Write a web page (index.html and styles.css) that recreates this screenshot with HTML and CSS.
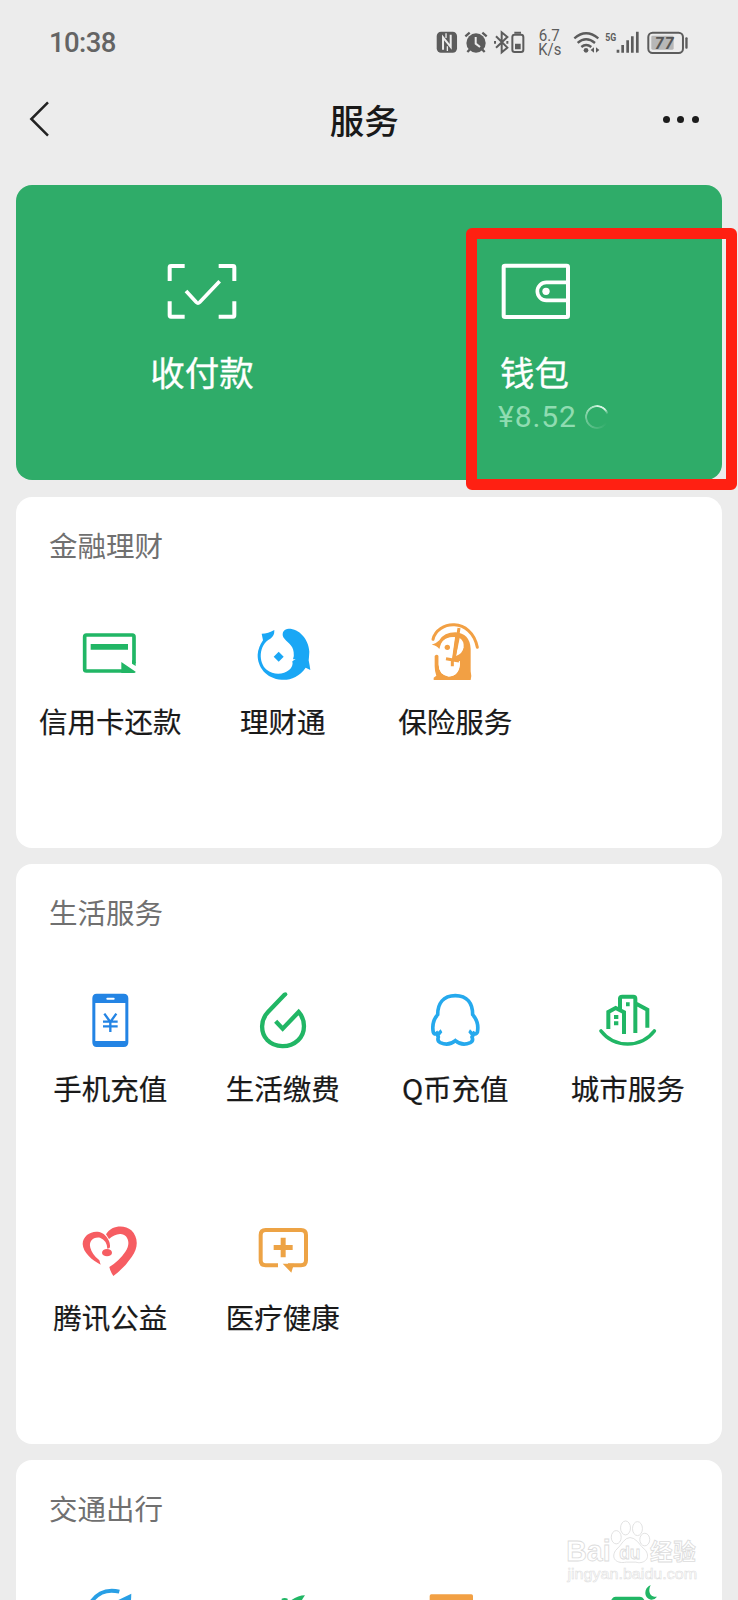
FILE: index.html
```html
<!DOCTYPE html>
<html lang="zh-CN">
<head>
<meta charset="utf-8">
<title>服务</title>
<link rel="stylesheet" href="styles.css">
</head>
<body>
<div class="screen">
  <div class="status">
    <span class="clock">10:38</span>
    <svg class="status-icons" viewBox="40 40 780 110" fill="#5c5c5c">
      <rect x="51" y="63" width="61" height="63" rx="13"/>
      <path d="M70 117V80L93 109V72" fill="none" stroke="#ececec" stroke-width="6"/>
      <path d="M79 68v14M83 121v-14" stroke="#ececec" stroke-width="4"/>
      <circle cx="169" cy="97" r="29"/>
      <path d="M137 77l13-11M201 77l-13-11M150 117l-7 7M188 117l7 7" stroke="#5c5c5c" stroke-width="7"/>
      <path d="M168 79v20l13 10" fill="none" stroke="#ececec" stroke-width="6"/>
      <path d="M229 77l34 34-17 14V65l17 14-34 32M226 91v8M263 91v8" fill="none" stroke="#5c5c5c" stroke-width="6"/>
      <rect x="278" y="72" width="33" height="52" rx="7" fill="none" stroke="#5c5c5c" stroke-width="6"/>
      <path d="M284 63h20v6h-20zM286 99h17v17h-17z"/>
      <text class="net" x="357" y="90" textLength="63" lengthAdjust="spacingAndGlyphs">6.7</text>
      <text class="net" x="356" y="134" textLength="69" lengthAdjust="spacingAndGlyphs">K/s</text>
      <path d="M464 83q35-30 72 0M474 97q25-22 52 0M485 109q14-12 30 0" fill="none" stroke="#5c5c5c" stroke-width="7"/>
      <circle cx="499" cy="119" r="7"/>
      <path d="M513 118l10-8v16zM539 118l-10-8v16z"/>
      <text class="five" x="557" y="90" textLength="33" lengthAdjust="spacingAndGlyphs">5G</text>
      <path d="M595 117v9M609 103v23M624 89v37M638 77v49M653 63v63" stroke="#5c5c5c" stroke-width="8"/>
      <rect x="686" y="66" width="104" height="61" rx="13" fill="none" stroke="#5c5c5c" stroke-width="6"/>
      <rect x="695" y="75" width="67" height="42" rx="4" fill="#b7b7b7"/>
      <rect x="797" y="80" width="7" height="34" rx="3"/>
      <text class="charge" x="705" y="114" textLength="57">77</text>
    </svg>
  </div>

  <div class="navbar">
    <svg class="back" viewBox="85 270 70 115"><path d="M145 277L95 327l50 50" fill="none" stroke="#222" stroke-width="7.500"/></svg>
    <h1 class="title">服务</h1>
    <div class="more"><i></i><i></i><i></i></div>
  </div>

  <div class="cards">
    <div class="pay">
      <div class="pay-item">
        <svg class="pay-icon" viewBox="109 66 216 176" fill="none" stroke="#fff" stroke-width="12">
          <path d="M120 123V82q0-4 4-4h41M267 78h43q4 0 4 4v41M120 184v42q0 4 4 4h41M267 230h43q4 0 4-4v-42"/>
          <path d="M169 153l31 34q5 5 10 0l60-63" stroke-width="11"/>
        </svg>
        <span class="pay-label">收付款</span>
      </div>
      <div class="pay-item wallet">
        <svg class="pay-icon" viewBox="150 126 216 176" fill="none" stroke="#fff" stroke-width="12">
          <rect x="161" y="137" width="193" height="154" rx="4"/>
          <path d="M354 187h-65a27 27 0 0 0 0 54h65" stroke-width="11"/>
          <circle cx="288" cy="214" r="11" fill="#fff" stroke="none"/>
        </svg>
        <span class="pay-label">钱包</span>
        <div class="balance"><span class="amount">¥8.52</span><i class="spinner"></i></div>
      </div>
      <div class="highlight"></div>
    </div>

    <section class="card">
      <h2 class="heading">金融理财</h2>
      <div class="grid">
        <div class="cell">
          <svg class="icon" viewBox="145 63 192 192" fill="#21b665">
            <path d="M313 190v-80q0-5-5-5H170q-5 0-5 5v98q0 5 5 5h122" fill="none" stroke="#21b665" stroke-width="11"/>
            <path d="M183 132h112v17H183zM275 186l43 29q0 4-6 4h-37zM307 180l11 7v11l-11-7z"/>
          </svg><span class="label">信用卡还款</span></div>
        <div class="cell">
          <svg class="icon" viewBox="32 63 192 192" fill="#1aa7f5">
            <path d="M64 101Q84 101 102 90Q103 108 90 116C54 135 54 188 79 209C111 236 164 214 156 184L166 177L158 178Q162 170 160 157C158 133 139 128 129 112C123 97 132 86 145 86C176 86 205 116 207 155Q206 173 205 181Q208 195 210 210L196 203C177 231 149 241 124 239C77 236 51 200 52 164Q53 143 68 121Z"/>
            <path d="M115 155l15 15-15 15-15-15z"/>
          </svg><span class="label">理财通</span></div>
        <div class="cell">
          <svg class="icon" viewBox="-5 9 192 192" fill="#f2a044">
            <path d="M25 64C37 8 140 -4 158 88" fill="none" stroke="#f2a044" stroke-width="9" stroke-linecap="round"/>
            <path d="M21 80Q36 76 44 67Q58 43 92 43Q135 46 138 92V160Q142 176 138 186H27V179L35 173Q30 160 30 145V114q6-7 12 0v25q0 32 30 37Q104 174 106 136L80 126L90 58Q60 54 49 77L44 93Q37 82 21 80Z"/>
            <path d="M48 84Q57 57 91 57L82 122L106 130Q106 174 73 175Q42 170 42 140V98L47 94Z" fill="#fff"/>
            <path d="M105 60Q119 69 117 88Q114 107 94 114Z" fill="#fff"/>
            <path d="M103 30L88 124M64 122L103 129M83 124V145" fill="none" stroke="#f2a044" stroke-width="9"/>
            <circle cx="68" cy="88" r="8"/>
          </svg><span class="label">保险服务</span></div>
      </div>
    </section>

    <section class="card">
      <h2 class="heading">生活服务</h2>
      <div class="grid">
        <div class="cell">
          <svg class="icon" viewBox="115 54 192 192" fill="#2384e4">
            <path fill-rule="evenodd" d="M171 71h81q14 0 14 14v132q0 14-14 14h-81q-13 0-13-14V85q0-14 13-14zM167 99v114h90V99z"/>
            <path d="M203 86h19" stroke="#fff" stroke-width="6" stroke-linecap="round"/>
            <path d="M194 131l18 25 18-25M190 155h44M190 169h44M212 154v32" fill="none" stroke="#2384e4" stroke-width="7"/>
          </svg><span class="label">手机充值</span></div>
        <div class="cell">
          <svg class="icon" viewBox="632 54 192 192" fill="none" stroke="#21b665" stroke-width="13">
            <path d="M734 73L683 126C660 150 660 187 680 209C704 234 747 235 773 211C798 188 795 148 775 126L727 176L706 154" stroke-linejoin="miter"/>
            <circle cx="735" cy="73" r="6" fill="#21b665" stroke="none"/>
          </svg><span class="label">生活缴费</span></div>
        <div class="cell">
          <svg class="icon" viewBox="70 54 192 192" fill="none" stroke="#25a9ed" stroke-width="11">
            <path d="M167 77C130 77 114 102 114 134C101 149 97 168 101 187Q104 195 111 190L116 201Q112 213 122 218Q147 229 167 212Q187 229 212 218Q222 213 217 201L223 190Q230 194 233 187C237 168 232 149 219 134C219 101 203 77 167 77Z"/>
            <path d="M109 191l14-13 5 9-12 15M225 191l-14-13-5 9 12 15" fill="#25a9ed" stroke="none"/>
          </svg><span class="label">Q币充值</span></div>
        <div class="cell">
          <svg class="icon" viewBox="587 54 192 192" fill="none" stroke="#21b665" stroke-width="12">
            <path d="M624 177v-51l22-12 25 13v65M659 119V86q0-6 7-6h33q6 0 6 6v103M705 100l36 19v54"/>
            <path d="M602 183Q632 222 682 222Q732 222 762 183" stroke-width="11" stroke-linecap="round"/>
            <path d="M641 135h13v12h-13zM641 154h13v12h-13zM677 97h11v12h-11z" fill="#21b665" stroke="none"/>
          </svg><span class="label">城市服务</span></div>
        <div class="cell">
          <svg class="icon" viewBox="115 51 192 192" fill="#f65d62">
            <path d="M183 194C157 181 130 157 129 132C130 97 181 80 203 114Q214 131 210 144L203 146Q202 121 181 113C159 110 147 125 152 143Q157 163 179 181Z"/>
            <path d="M199 103C216 75 255 74 275 91C296 112 297 143 276 171Q255 203 221 228Q213 217 209 201Q240 181 257 155C276 129 263 101 241 102Q223 103 208 117Z"/>
            <ellipse cx="202" cy="158" rx="15" ry="11"/>
          </svg><span class="label">腾讯公益</span></div>
        <div class="cell">
          <svg class="icon" viewBox="632 51 192 192" fill="#eda345">
            <path d="M713 196h-37q-15 0-15-15V105q0-15 15-15h106q15 0 15 15v76q0 15-15 15h-39" fill="none" stroke="#eda345" stroke-width="12"/>
            <path d="M721 113h15v22h21v15h-21v22h-15v-22h-21v-15h21zM727 191h34l-8 27z"/>
          </svg><span class="label">医疗健康</span></div>
      </div>
    </section>

    <section class="card">
      <h2 class="heading">交通出行</h2>
      <div class="grid">
        <div class="cell"><svg class="icon" viewBox="115 315 192 192" fill="none" stroke="#289fe5" stroke-width="12">
          <path d="M239 338C195 327 163 348 145 386"/><path d="M275 344l-39 19v20h37z" fill="#289fe5" stroke="none"/>
        </svg></div>
        <div class="cell"><svg class="icon" viewBox="632 315 192 192" fill="#21b665">
          <path d="M794 349q-21 0-42 15v20h21q8-16 21-35zM724 359q9-4 18 0v20h-18z"/>
        </svg></div>
        <div class="cell"><svg class="icon" viewBox="1150 315 192 192" fill="#f2a044">
          <rect x="1170" y="346" width="130" height="120" rx="5"/>
        </svg></div>
        <div class="cell"><svg class="icon" viewBox="167 315 192 192" fill="#21b665">
          <path d="M226 353h72q10 0 15 12v100H211v-98q5-14 15-14zM331 318c-23 10-20 41 1 44q11 1 18-9c-20 3-29-16-19-35z"/>
        </svg></div>
      </div>
    </section>
  </div>

  <svg class="watermark" viewBox="70 110 410 205" fill="#fff" stroke="#dcdcdc" stroke-width="2.500">
    <text class="wm-big" x="78" y="244" textLength="134" lengthAdjust="spacingAndGlyphs">Bai</text>
    <ellipse cx="229" cy="171" rx="15" ry="20"/>
    <ellipse cx="257" cy="143" rx="15" ry="21"/>
    <ellipse cx="293" cy="145" rx="15" ry="21"/>
    <ellipse cx="315" cy="178" rx="15" ry="19"/>
    <path d="M250 184q20-24 43 0 13 17 25 27c17 27-10 42-30 35h-29c-27 6-48-10-32-35q14-14 23-27z"/>
    <text class="wm-du" x="238" y="237" textLength="64" lengthAdjust="spacingAndGlyphs">du</text>
    <text class="wm-cn" x="331" y="239" textLength="138">经验</text>
    <text class="wm-url" x="82" y="297" textLength="391" lengthAdjust="spacingAndGlyphs">jingyan.baidu.com</text>
  </svg>
</div>
</body>
</html>
```

FILE: styles.css
```css
* { box-sizing: border-box; }
body { margin: 0; background: #ececec; }
.screen {
  position: relative;
  width: 738px;
  height: 1600px;
  overflow: hidden;
  background: #ececec;
  color: #191919;
  font-family: "Noto Sans CJK SC", sans-serif;
}
.status {
  display: flex;
  justify-content: space-between;
  align-items: center;
  height: 84px;
  padding: 0 45px 0 49px;
}
.clock {
  font: 500 27.500px Roboto, sans-serif;
  color: #646464;
  letter-spacing: -0.6px;
}
.status-icons { width: 260px; height: 36.670px; }
.net { font: 48px Roboto, sans-serif; }
.five { font: bold 35px Roboto, sans-serif; }
.charge { font: italic bold 48px Roboto, sans-serif; fill: #555; }

.navbar {
  display: flex;
  align-items: center;
  justify-content: space-between;
  height: 101px;
  padding: 0 39px 31px 28px;
}
.back { width: 23.330px; height: 38.330px; }
.title { margin: 0; padding-left: 14px; font-size: 34.500px; line-height: 50px; font-weight: 500; }
.more { display: flex; gap: 7.500px; }
.more i { width: 7px; height: 7px; border-radius: 50%; background: #1c1c1c; }

.cards { display: flex; flex-direction: column; gap: 16px; padding: 0 16px; }
.pay {
  position: relative;
  display: flex;
  height: 295px;
  border-radius: 16px;
  background: #2fac69;
  color: #fff;
}
.pay-item {
  display: flex;
  flex-direction: column;
  align-items: center;
  width: 372px;
  padding-top: 77px;
}
.wallet { align-items: flex-start; width: 334px; padding-left: 112px; }
.pay-icon { width: 72px; height: 58.670px; }
.pay-label { margin-top: 25px; font-size: 34.500px; line-height: 50px; -webkit-text-stroke: 0.3px #fff; }
.balance {
  display: flex;
  align-items: center;
  gap: 8px;
  height: 42px;
  margin-left: -2px;
  color: #8fdcb1;
}
.amount { font: 30px Roboto, sans-serif; letter-spacing: 0.9px; }
.spinner {
  width: 24px;
  height: 24px;
  border-radius: 50%;
  background: conic-gradient(#d8f5e4 0deg, #d8f5e4 45deg, rgba(255,255,255,0) 75deg, rgba(255,255,255,0) 120deg, rgba(190,235,208,.5) 270deg, #c2efd4 360deg);
  -webkit-mask: radial-gradient(circle, transparent 9.500px, #000 10.300px);
  mask: radial-gradient(circle, transparent 9.500px, #000 10.300px);
}
.highlight {
  position: absolute;
  left: 450px;
  top: 43px;
  width: 271px;
  height: 262px;
  border: 11.500px solid #ff2012;
  border-radius: 6px;
}
.card { border-radius: 16px; background: #fff; padding: 28px 8px 24px; }
.card:nth-child(2) { margin-top: 1px; }
.card:last-child { height: 400px; }
.heading {
  margin: -1px 0 29px;
  padding-left: 25px;
  font-size: 28.500px;
  line-height: 42px;
  font-weight: 400;
  color: #707070;
}
.grid { display: grid; grid-template-columns: repeat(4, 1fr); grid-auto-rows: 229px; }
.cell { display: flex; flex-direction: column; align-items: center; padding-top: 26px; }
.icon { width: 64px; height: 64px; }
.label { margin-top: 15px; font-size: 28.500px; line-height: 42px; white-space: nowrap; -webkit-text-stroke: 0.2px #191919; }

.watermark { position: absolute; left: 563px; top: 1517px; width: 137px; height: 68px; }
.wm-big { font: bold 88px "Liberation Sans", sans-serif; }
.wm-du { font: bold 56px "Liberation Sans", sans-serif; }
.wm-cn { font: bold 68px "Noto Sans CJK SC", sans-serif; }
.wm-url { font: 44px "Liberation Sans", sans-serif; stroke-width: 1.500px; }
```
